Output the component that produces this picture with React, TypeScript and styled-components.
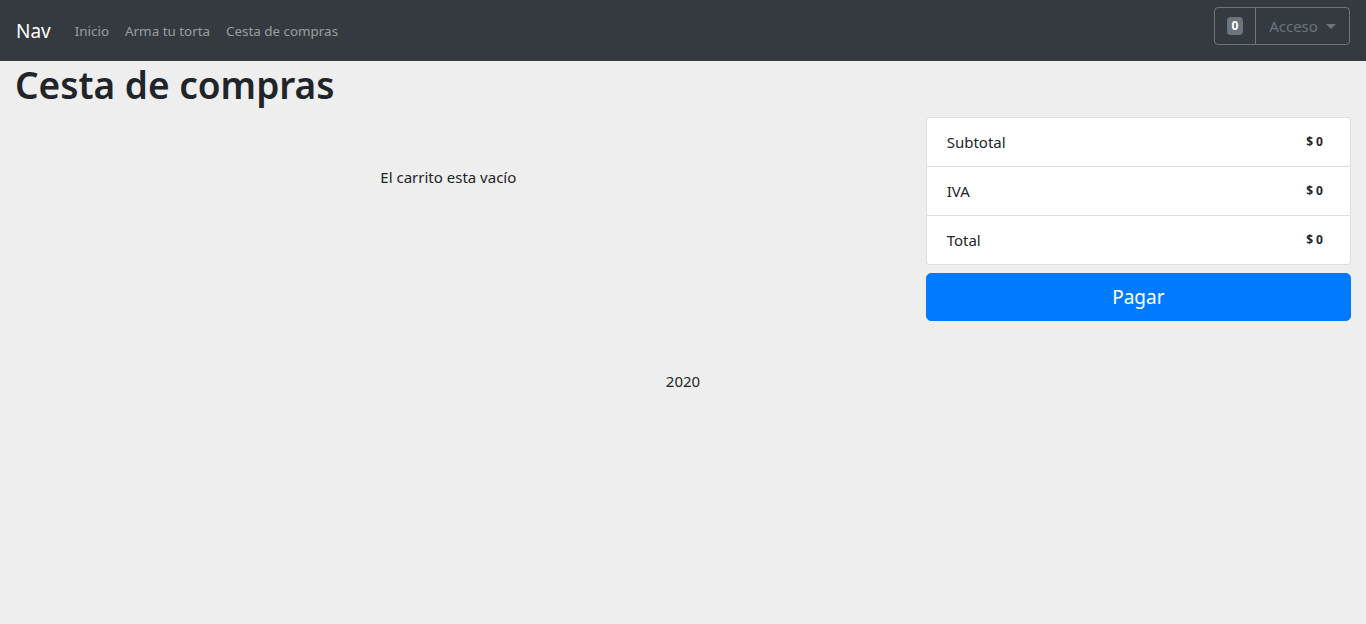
import styled, { createGlobalStyle } from "styled-components";

const GlobalStyle = createGlobalStyle`
  *, *::before, *::after { box-sizing: border-box; }
  body {
    margin: 0;
    background: #eeeeee;
    color: #212529;
    font-family: "Noto Sans", "Open Sans", sans-serif;
    font-size: 15px;
    line-height: 24px;
  }
`;

const Navbar = styled.nav`
  display: flex;
  align-items: center;
  height: 61px;
  padding: 0 16px;
  background: #343a40;
`;

const Brand = styled.a`
  color: #fff;
  font-size: 19px;
  line-height: 30px;
  margin-right: 16px;
  margin-top: 1px;
  text-decoration: none;
`;

const NavLinks = styled.div`
  display: flex;
  margin-top: 1px;
`;

const NavLink = styled.a`
  color: rgba(255, 255, 255, 0.5);
  font-size: 13.4px;
  padding: 8px 8px;
  text-decoration: none;
`;

const RightGroup = styled.div`
  display: flex;
  margin-left: auto;
  align-self: flex-start;
  margin-top: 7px;
`;

const OutlineButton = styled.button<{ $first?: boolean }>`
  display: flex;
  align-items: center;
  justify-content: center;
  height: 38px;
  width: ${(p) => (p.$first ? "42px" : "95px")};
  padding: 0;
  background: transparent;
  border: 1px solid #6c757d;
  border-radius: ${(p) => (p.$first ? "4px 0 0 4px" : "0 4px 4px 0")};
  margin-left: ${(p) => (p.$first ? "0" : "-1px")};
  color: #6c757d;
  font-family: inherit;
  font-size: 15px;
`;

const CountBadge = styled.span`
  display: inline-block;
  background: #6c757d;
  color: #fff;
  font-size: 12px;
  font-weight: 700;
  line-height: 1;
  padding: 3px 5px;
  border-radius: 4px;
`;

const Caret = styled.span`
  display: inline-block;
  margin-left: 8px;
  border-top: 5px solid #6c757d;
  border-left: 5px solid transparent;
  border-right: 5px solid transparent;
`;

const Container = styled.main`
  padding: 0 15px;
`;

const Title = styled.h1`
  margin: 0 0 8px;
  font-size: 37px;
  font-weight: 600;
  line-height: 48px;
`;

const Row = styled.div`
  display: grid;
  grid-template-columns: 2fr 1fr;
  margin: 0 -15px;
`;

const Column = styled.div`
  padding: 0 15px;
`;

const EmptyMessage = styled.p`
  margin: 48px 0 0;
  padding-right: 14px;
  text-align: center;
`;

const SummaryCard = styled.ul`
  list-style: none;
  margin: 0;
  padding: 0;
  background: #fff;
  border: 1px solid rgba(0, 0, 0, 0.125);
  border-radius: 4px;
`;

const SummaryRow = styled.li`
  display: flex;
  justify-content: space-between;
  align-items: center;
  padding: 12px 20px;
  & + & {
    border-top: 1px solid rgba(0, 0, 0, 0.125);
  }
`;

const Amount = styled.span`
  font-size: 12px;
  font-weight: 700;
  padding: 0 7px;
`;

const PayButton = styled.button`
  display: block;
  width: 100%;
  margin-top: 8px;
  height: 48px;
  background: #007bff;
  color: #fff;
  border: 1px solid #007bff;
  border-radius: 5px;
  font-family: inherit;
  font-size: 19px;
`;

const Footer = styled.footer`
  margin-top: 48px;
  text-align: center;
`;

const totals = [
  { label: "Subtotal", value: "$ 0" },
  { label: "IVA", value: "$ 0" },
  { label: "Total", value: "$ 0" },
];

export default function App() {
  return (
    <>
      <GlobalStyle />
      <Navbar>
        <Brand href="#">Nav</Brand>
        <NavLinks>
          <NavLink href="#">Inicio</NavLink>
          <NavLink href="#">Arma tu torta</NavLink>
          <NavLink href="#">Cesta de compras</NavLink>
        </NavLinks>
        <RightGroup>
          <OutlineButton $first>
            <CountBadge>0</CountBadge>
          </OutlineButton>
          <OutlineButton>
            Acceso
            <Caret />
          </OutlineButton>
        </RightGroup>
      </Navbar>
      <Container>
        <Title>Cesta de compras</Title>
        <Row>
          <Column>
            <EmptyMessage>El carrito esta vacío</EmptyMessage>
          </Column>
          <Column>
            <SummaryCard>
              {totals.map((t) => (
                <SummaryRow key={t.label}>
                  <span>{t.label}</span>
                  <Amount>{t.value}</Amount>
                </SummaryRow>
              ))}
            </SummaryCard>
            <PayButton>Pagar</PayButton>
          </Column>
        </Row>
        <Footer>2020</Footer>
      </Container>
    </>
  );
}
